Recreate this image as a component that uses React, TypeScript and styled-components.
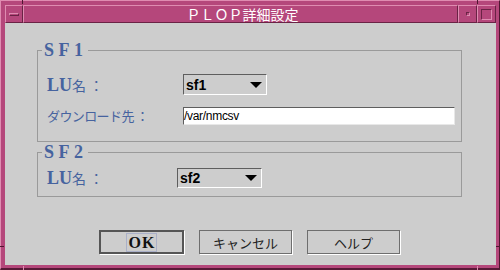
import React from "react";
import styled, { createGlobalStyle } from "styled-components";

const GlobalStyle = createGlobalStyle`
  html, body { margin: 0; padding: 0; background: #cdcdcd; }
  body { width: 500px; height: 270px; overflow: hidden; }
  * { box-sizing: border-box; }
`;

const PINK = "#b5477b";
const PINK_LIGHT = "#df8cb1";
const PINK_DARK = "#6a2345";
const BLUE = "#46639f";

const Window = styled.div`
  position: relative;
  width: 500px;
  height: 270px;
  background: ${PINK};
  border-top: 1px solid ${PINK_LIGHT};
  border-left: 1px solid ${PINK_LIGHT};
  border-right: 1px solid #4e1730;
  border-bottom: 2px solid #561a36;
  padding: 4px 3px 3px 4px;
  display: flex;
  flex-direction: column;
`;

const Notch = styled.span<{ $v?: boolean; $light?: boolean }>`
  position: absolute;
  width: ${(p) => (p.$v ? "1px" : "4px")};
  height: ${(p) => (p.$v ? "4px" : "1px")};
  background: ${(p) => (p.$light ? PINK_LIGHT : "#4e1730")};
`;

const TitleBar = styled.div`
  height: 18px;
  display: flex;
  flex-direction: row;
  flex: none;
`;

const Bevel = styled.div`
  border-top: 1px solid ${PINK_LIGHT};
  border-left: 1px solid ${PINK_LIGHT};
  border-right: 1px solid ${PINK_DARK};
  border-bottom: 1px solid ${PINK_DARK};
  display: flex;
  align-items: center;
  justify-content: center;
`;

const MenuButton = styled(Bevel)`
  width: 18px;
`;

const MenuBar = styled.span`
  width: 10px;
  height: 3px;
  border-top: 1px solid ${PINK_LIGHT};
  border-left: 1px solid ${PINK_LIGHT};
  border-bottom: 1px solid ${PINK_DARK};
  border-right: 1px solid ${PINK_DARK};
`;

const TitleArea = styled(Bevel)`
  flex: 1;
  color: #ffffff;
  font-family: "Noto Sans CJK JP", "DejaVu Sans", sans-serif;
  font-size: 14px;
  line-height: 16px;
  padding-left: 4px;
`;

const WinButton = styled(Bevel)`
  width: 19px;
`;

const MinDot = styled.span`
  width: 4px;
  height: 4px;
  border-top: 1px solid ${PINK_DARK};
  border-left: 1px solid ${PINK_DARK};
  border-bottom: 1px solid ${PINK_LIGHT};
  border-right: 1px solid ${PINK_LIGHT};
`;

const MaxBox = styled.span`
  width: 11px;
  height: 11px;
  border-top: 1px solid ${PINK_DARK};
  border-left: 1px solid ${PINK_DARK};
  border-bottom: 1px solid ${PINK_LIGHT};
  border-right: 1px solid ${PINK_LIGHT};
`;

const Client = styled.div`
  flex: 1;
  background: #cdcdcd;
  padding-top: 18px;
  display: flex;
  flex-direction: column;
`;

const Group = styled.fieldset<{ $pt: number; $pb: number; $mt: number }>`
  margin: ${(p) => p.$mt}px 0 0 32px;
  width: 425px;
  border: 1px solid #9a9a9a;
  padding: ${(p) => p.$pt}px 8px ${(p) => p.$pb}px 9px;
  min-inline-size: 0;
`;

const Legend = styled.legend`
  margin-left: -5px;
  padding: 0 0 0 2px;
  font-family: "Liberation Serif", "Times New Roman", serif;
  font-weight: bold;
  font-size: 18px;
  line-height: 18px;
  letter-spacing: 4.5px;
  color: ${BLUE};
`;

const FormGrid = styled.div<{ $col: number; $gap: number }>`
  display: grid;
  grid-template-columns: ${(p) => p.$col}px auto;
  row-gap: ${(p) => p.$gap}px;
  align-items: center;
  justify-items: start;
`;

const Label = styled.span`
  font-family: "Liberation Serif", "Times New Roman", serif;
  font-weight: bold;
  font-size: 18px;
  line-height: 20px;
  color: ${BLUE};
  white-space: pre;
`;

const Kana = styled.span`
  font-family: "Noto Sans CJK JP", sans-serif;
  font-weight: normal;
  font-size: 14px;
`;

const LightLabel = styled.span`
  font-family: "Noto Sans CJK JP", sans-serif;
  font-size: 13px;
  line-height: 18px;
  letter-spacing: -0.6px;
  color: ${BLUE};
  white-space: pre;
`;

const Combo = styled.div<{ $w: number; $h: number }>`
  width: ${(p) => p.$w}px;
  height: ${(p) => p.$h}px;
  background: #cdcdcd;
  border-top: 1px solid #5e5e5e;
  border-left: 1px solid #5e5e5e;
  border-bottom: 1px solid #ffffff;
  border-right: 1px solid #ffffff;
  display: flex;
  align-items: center;
  justify-content: space-between;
  padding: 0 4px 0 2px;
  font-family: "Liberation Sans", Arial, sans-serif;
  font-weight: bold;
  font-size: 14px;
  color: #000;
`;

const Arrow = styled.span`
  width: 0;
  height: 0;
  border-left: 6px solid transparent;
  border-right: 6px solid transparent;
  border-top: 6px solid #000;
`;

const TextField = styled.div`
  width: 272px;
  height: 18px;
  background: #ffffff;
  border-top: 1px solid #5e5e5e;
  border-left: 1px solid #5e5e5e;
  border-bottom: 1px solid #e8e8e8;
  border-right: 1px solid #e8e8e8;
  font-family: "Liberation Sans", Arial, sans-serif;
  font-size: 12px;
  line-height: 16px;
  color: #000;
  padding-left: 0;
  letter-spacing: -0.3px;
`;

const ButtonRow = styled.div`
  margin-top: 33px;
  margin-left: 94px;
  display: flex;
  gap: 15px;
`;

const Button = styled.div<{ $w: number; $default?: boolean }>`
  width: ${(p) => p.$w}px;
  height: 24px;
  background: #cdcdcd;
  border: ${(p) => (p.$default ? "2px solid #555555" : "1px solid #6e6e6e")};
  box-shadow: 1px 1px 0 #ffffff;
  display: flex;
  align-items: center;
  justify-content: center;
  font-family: "Noto Sans CJK JP", sans-serif;
  font-size: 13px;
  color: #222;
`;

const OkText = styled.span`
  font-family: "Liberation Serif", "Times New Roman", serif;
  font-weight: bold;
  font-size: 16px;
  line-height: 16px;
  letter-spacing: 1px;
  color: #111;
  padding: 1px 1px 0 2px;
  border: 1px solid #aab0c8;
`;

export default function App() {
  return (
    <>
      <GlobalStyle />
      <Window>
        <TitleBar>
          <MenuButton>
            <MenuBar />
          </MenuButton>
          <TitleArea>ＰＬＯＰ詳細設定</TitleArea>
          <WinButton>
            <MinDot />
          </WinButton>
          <WinButton>
            <MaxBox />
          </WinButton>
        </TitleBar>
        <Client>
          <Group $pt={15} $pb={16} $mt={0}>
            <Legend>SF1</Legend>
            <FormGrid $col={136} $gap={12}>
              <Label>
                LU<Kana>名 ：</Kana>
              </Label>
              <Combo $w={84} $h={21}>
                <span>sf1</span>
                <Arrow />
              </Combo>
              <LightLabel>ダウンロード先 ：</LightLabel>
              <TextField>/var/nmcsv</TextField>
            </FormGrid>
          </Group>
          <Group $pt={7} $pb={8} $mt={1}>
            <Legend>SF2</Legend>
            <FormGrid $col={130} $gap={0}>
              <Label>
                LU<Kana>名 ：</Kana>
              </Label>
              <Combo $w={85} $h={20}>
                <span>sf2</span>
                <Arrow />
              </Combo>
            </FormGrid>
          </Group>
          <ButtonRow>
            <Button $w={85} $default>
              <OkText>OK</OkText>
            </Button>
            <Button $w={93}>キャンセル</Button>
            <Button $w={93}>ヘルプ</Button>
          </ButtonRow>
        </Client>
      </Window>
      <Notch $v style={{ left: 22, top: 0 }} />
      <Notch $v style={{ left: 477, top: 0 }} />
      <Notch style={{ left: 0, top: 246 }} />
      <Notch style={{ left: 496, top: 246 }} />
      <Notch $v $light style={{ left: 23, top: 266 }} />
      <Notch $v $light style={{ left: 477, top: 266 }} />
    </>
  );
}
